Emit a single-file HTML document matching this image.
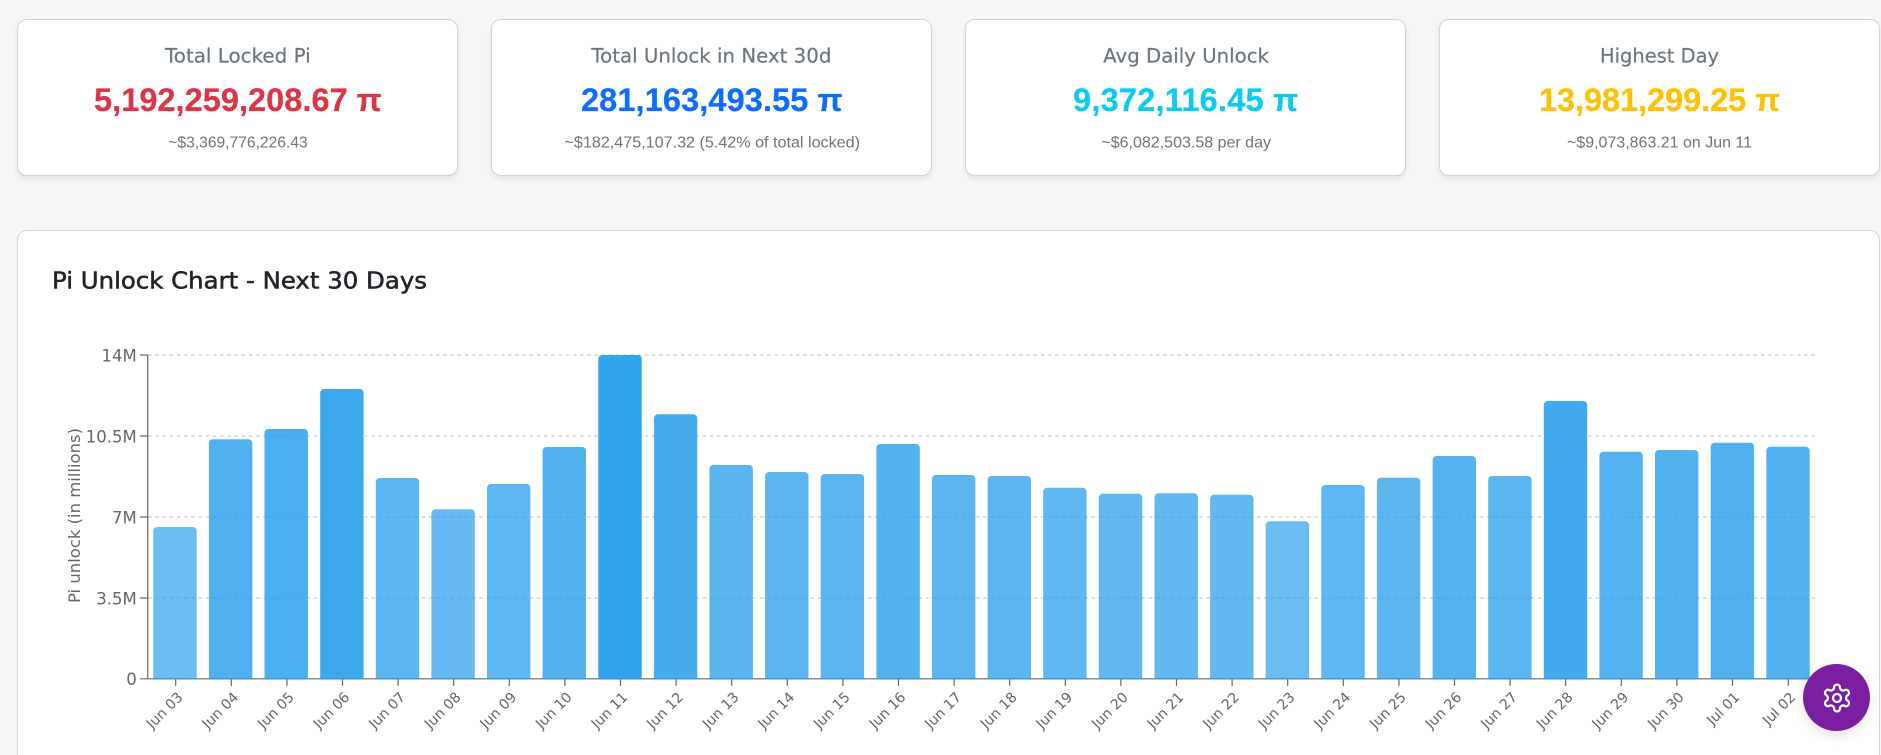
<!DOCTYPE html>
<html lang="en">
<head>
<meta charset="utf-8">
<title>Pi Unlock Dashboard</title>
<style>
html,body{margin:0;padding:0;width:1881px;height:755px;overflow:hidden;background:#f6f6f6;}
body{position:relative;font-family:"Liberation Sans",Arial,sans-serif;}
.card{position:absolute;box-sizing:border-box;background:#fff;border:1px solid #d4d4d4;border-radius:10px;box-shadow:0 3px 6px rgba(0,0,0,.08);}
svg.page{position:absolute;left:0;top:0;}
.fab{position:absolute;left:1803px;top:664px;width:67px;height:67px;border-radius:50%;background:#7b1fa2;box-shadow:0 4px 12px rgba(0,0,0,.12);}
.fab svg{position:absolute;left:17.5px;top:17.5px;}
text{font-family:"DejaVu Sans",sans-serif;}
.t{font-size:19.5px;fill:#6c757d;stroke:#6c757d;stroke-width:.2px;}
.n{font-family:"Liberation Sans",Arial,sans-serif;font-size:32.5px;font-weight:700;stroke-width:.25px;}
.s{font-family:"Liberation Sans",Arial,sans-serif;font-size:16px;fill:#6c757d;}
.yl{font-size:16.5px;fill:#666;text-anchor:end;}
.xl{font-size:14.1px;fill:#666;text-anchor:end;}
</style>
</head>
<body>
<div class="card" style="left:17px;top:19px;width:441px;height:157px"></div>
<div class="card" style="left:491px;top:19px;width:441px;height:157px"></div>
<div class="card" style="left:965px;top:19px;width:441px;height:157px"></div>
<div class="card" style="left:1439px;top:19px;width:440.5px;height:157px"></div>
<div class="card" style="left:17px;top:230px;width:1862.5px;height:525px;border-bottom:none;border-radius:10px 10px 0 0;box-shadow:none"></div>

<svg class="page" width="1881" height="755" viewBox="0 0 1881 755" xmlns="http://www.w3.org/2000/svg">
<defs><clipPath id="c"><rect x="140" y="340" width="1690" height="339.4"/></clipPath></defs>

<text class="t" x="165" y="62.7" textLength="145.7" lengthAdjust="spacingAndGlyphs">Total Locked Pi</text>
<text class="n" x="94" y="111" fill="#dc3545" stroke="#dc3545" textLength="287.7" lengthAdjust="spacing">5,192,259,208.67 π</text>
<text class="s" x="168.3" y="147.3" textLength="139.4" lengthAdjust="spacingAndGlyphs">~$3,369,776,226.43</text>

<text class="t" x="591.4" y="62.7" textLength="240" lengthAdjust="spacingAndGlyphs">Total Unlock in Next 30d</text>
<text class="n" x="581" y="111" fill="#0d6efd" stroke="#0d6efd" textLength="261.5" lengthAdjust="spacing">281,163,493.55 π</text>
<text class="s" x="564.5" y="147.3" textLength="295.5" lengthAdjust="spacingAndGlyphs">~$182,475,107.32 (5.42% of total locked)</text>

<text class="t" x="1103.2" y="62.7" textLength="165.8" lengthAdjust="spacingAndGlyphs">Avg Daily Unlock</text>
<text class="n" x="1073" y="111" fill="#0dcaf0" stroke="#0dcaf0" textLength="225" lengthAdjust="spacing">9,372,116.45 π</text>
<text class="s" x="1101.4" y="147.3" textLength="169.6" lengthAdjust="spacingAndGlyphs">~$6,082,503.58 per day</text>

<text class="t" x="1600" y="62.7" textLength="119" lengthAdjust="spacingAndGlyphs">Highest Day</text>
<text class="n" x="1539" y="111" fill="#ffc107" stroke="#ffc107" textLength="241" lengthAdjust="spacing">13,981,299.25 π</text>
<text class="s" x="1567" y="147.3" textLength="185" lengthAdjust="spacingAndGlyphs">~$9,073,863.21 on Jun 11</text>

<text x="52" y="288.5" font-size="23.5" fill="#212529" stroke="#212529" stroke-width=".55" textLength="375" lengthAdjust="spacingAndGlyphs">Pi Unlock Chart - Next 30 Days</text>

<g stroke="#ccc" stroke-width="1.2" stroke-dasharray="3.6 3.6" fill="none">
<line x1="148" x2="1817" y1="355" y2="355"/>
<line x1="148" x2="1817" y1="436" y2="436"/>
<line x1="148" x2="1817" y1="517" y2="517"/>
<line x1="148" x2="1817" y1="598" y2="598"/>
</g>

<g stroke="#666" stroke-width="1.2" fill="none">
<line x1="147.7" x2="147.7" y1="355" y2="679"/>
<line x1="140" x2="1817" y1="678.8" y2="678.8"/>
<line x1="140" x2="147.7" y1="355" y2="355"/>
<line x1="140" x2="147.7" y1="436" y2="436"/>
<line x1="140" x2="147.7" y1="517" y2="517"/>
<line x1="140" x2="147.7" y1="598" y2="598"/>
<line x1="175.7" x2="175.7" y1="679" y2="686"/><line x1="231.3" x2="231.3" y1="679" y2="686"/><line x1="286.9" x2="286.9" y1="679" y2="686"/><line x1="342.5" x2="342.5" y1="679" y2="686"/><line x1="398.1" x2="398.1" y1="679" y2="686"/><line x1="453.7" x2="453.7" y1="679" y2="686"/><line x1="509.3" x2="509.3" y1="679" y2="686"/><line x1="564.9" x2="564.9" y1="679" y2="686"/><line x1="620.5" x2="620.5" y1="679" y2="686"/><line x1="676.1" x2="676.1" y1="679" y2="686"/><line x1="731.7" x2="731.7" y1="679" y2="686"/><line x1="787.3" x2="787.3" y1="679" y2="686"/><line x1="842.9" x2="842.9" y1="679" y2="686"/><line x1="898.5" x2="898.5" y1="679" y2="686"/><line x1="954.1" x2="954.1" y1="679" y2="686"/><line x1="1009.7" x2="1009.7" y1="679" y2="686"/><line x1="1065.3" x2="1065.3" y1="679" y2="686"/><line x1="1120.9" x2="1120.9" y1="679" y2="686"/><line x1="1176.5" x2="1176.5" y1="679" y2="686"/><line x1="1232.1" x2="1232.1" y1="679" y2="686"/><line x1="1287.7" x2="1287.7" y1="679" y2="686"/><line x1="1343.3" x2="1343.3" y1="679" y2="686"/><line x1="1398.9" x2="1398.9" y1="679" y2="686"/><line x1="1454.5" x2="1454.5" y1="679" y2="686"/><line x1="1510.1" x2="1510.1" y1="679" y2="686"/><line x1="1565.7" x2="1565.7" y1="679" y2="686"/><line x1="1621.3" x2="1621.3" y1="679" y2="686"/><line x1="1676.9" x2="1676.9" y1="679" y2="686"/><line x1="1732.5" x2="1732.5" y1="679" y2="686"/><line x1="1788.3" x2="1788.3" y1="679" y2="686"/>
</g>

<g clip-path="url(#c)" fill="#219beb">
<rect x="153.3" y="527" width="43.4" height="170" rx="4" fill-opacity=".66"/>
<rect x="208.9" y="439.3" width="43.4" height="260" rx="4" fill-opacity=".79"/>
<rect x="264.5" y="429" width="43.4" height="270" rx="4" fill-opacity=".81"/>
<rect x="320.2" y="389" width="43.4" height="310" rx="4" fill-opacity=".87"/>
<rect x="375.8" y="478" width="43.4" height="220" rx="4" fill-opacity=".73"/>
<rect x="431.4" y="509.3" width="43.4" height="190" rx="4" fill-opacity=".69"/>
<rect x="487" y="484" width="43.4" height="210" rx="4" fill-opacity=".72"/>
<rect x="542.6" y="447" width="43.4" height="250" rx="4" fill-opacity=".78"/>
<rect x="598.3" y="355" width="43.4" height="340" rx="4" fill-opacity=".92"/>
<rect x="653.9" y="414.3" width="43.4" height="280" rx="4" fill-opacity=".83"/>
<rect x="709.5" y="465" width="43.4" height="230" rx="4" fill-opacity=".75"/>
<rect x="765.1" y="472" width="43.4" height="225" rx="4" fill-opacity=".74"/>
<rect x="820.7" y="474" width="43.4" height="225" rx="4" fill-opacity=".74"/>
<rect x="876.4" y="444" width="43.4" height="250" rx="4" fill-opacity=".78"/>
<rect x="932" y="475" width="43.4" height="220" rx="4" fill-opacity=".74"/>
<rect x="987.6" y="476" width="43.4" height="220" rx="4" fill-opacity=".74"/>
<rect x="1043.2" y="487.7" width="43.4" height="210" rx="4" fill-opacity=".72"/>
<rect x="1098.8" y="493.7" width="43.4" height="200" rx="4" fill-opacity=".71"/>
<rect x="1154.5" y="493.3" width="43.4" height="200" rx="4" fill-opacity=".71"/>
<rect x="1210.1" y="494.7" width="43.4" height="200" rx="4" fill-opacity=".71"/>
<rect x="1265.7" y="521.3" width="43.4" height="175" rx="4" fill-opacity=".67"/>
<rect x="1321.3" y="485" width="43.4" height="210" rx="4" fill-opacity=".72"/>
<rect x="1376.9" y="477.7" width="43.4" height="220" rx="4" fill-opacity=".73"/>
<rect x="1432.6" y="456" width="43.4" height="240" rx="4" fill-opacity=".77"/>
<rect x="1488.2" y="476" width="43.4" height="220" rx="4" fill-opacity=".74"/>
<rect x="1543.8" y="401" width="43.4" height="295" rx="4" fill-opacity=".85"/>
<rect x="1599.4" y="451.7" width="43.4" height="245" rx="4" fill-opacity=".77"/>
<rect x="1655" y="450" width="43.4" height="245" rx="4" fill-opacity=".78"/>
<rect x="1710.7" y="442.7" width="43.4" height="255" rx="4" fill-opacity=".79"/>
<rect x="1766.3" y="446.7" width="43.4" height="250" rx="4" fill-opacity=".78"/>
</g>

<text class="yl" x="136.7" y="361.5">14M</text>
<text class="yl" x="136.7" y="442.5">10.5M</text>
<text class="yl" x="136.7" y="523.5">7M</text>
<text class="yl" x="136.7" y="604.5">3.5M</text>
<text class="yl" x="136.7" y="685">0</text>

<text font-size="16" fill="#666" text-anchor="middle" transform="translate(80,515.5) rotate(-90)" textLength="175" lengthAdjust="spacingAndGlyphs">Pi unlock (in millions)</text>

<g>
<text class="xl" transform="translate(183.7,698) rotate(-45)">Jun 03</text>
<text class="xl" transform="translate(239.3,698) rotate(-45)">Jun 04</text>
<text class="xl" transform="translate(294.9,698) rotate(-45)">Jun 05</text>
<text class="xl" transform="translate(350.5,698) rotate(-45)">Jun 06</text>
<text class="xl" transform="translate(406.1,698) rotate(-45)">Jun 07</text>
<text class="xl" transform="translate(461.7,698) rotate(-45)">Jun 08</text>
<text class="xl" transform="translate(517.3,698) rotate(-45)">Jun 09</text>
<text class="xl" transform="translate(572.9,698) rotate(-45)">Jun 10</text>
<text class="xl" transform="translate(628.5,698) rotate(-45)">Jun 11</text>
<text class="xl" transform="translate(684.1,698) rotate(-45)">Jun 12</text>
<text class="xl" transform="translate(739.7,698) rotate(-45)">Jun 13</text>
<text class="xl" transform="translate(795.3,698) rotate(-45)">Jun 14</text>
<text class="xl" transform="translate(850.9,698) rotate(-45)">Jun 15</text>
<text class="xl" transform="translate(906.5,698) rotate(-45)">Jun 16</text>
<text class="xl" transform="translate(962.1,698) rotate(-45)">Jun 17</text>
<text class="xl" transform="translate(1017.7,698) rotate(-45)">Jun 18</text>
<text class="xl" transform="translate(1073.3,698) rotate(-45)">Jun 19</text>
<text class="xl" transform="translate(1128.9,698) rotate(-45)">Jun 20</text>
<text class="xl" transform="translate(1184.5,698) rotate(-45)">Jun 21</text>
<text class="xl" transform="translate(1240.1,698) rotate(-45)">Jun 22</text>
<text class="xl" transform="translate(1295.7,698) rotate(-45)">Jun 23</text>
<text class="xl" transform="translate(1351.3,698) rotate(-45)">Jun 24</text>
<text class="xl" transform="translate(1406.9,698) rotate(-45)">Jun 25</text>
<text class="xl" transform="translate(1462.5,698) rotate(-45)">Jun 26</text>
<text class="xl" transform="translate(1518.1,698) rotate(-45)">Jun 27</text>
<text class="xl" transform="translate(1573.7,698) rotate(-45)">Jun 28</text>
<text class="xl" transform="translate(1629.3,698) rotate(-45)">Jun 29</text>
<text class="xl" transform="translate(1684.9,698) rotate(-45)">Jun 30</text>
<text class="xl" transform="translate(1740.5,698) rotate(-45)">Jul 01</text>
<text class="xl" transform="translate(1796.3,698) rotate(-45)">Jul 02</text>
</g>
</svg>

<div class="fab">
<svg width="32" height="32" viewBox="0 0 24 24" fill="none" stroke="#fff" stroke-width="1.7" stroke-linecap="round" stroke-linejoin="round"><path d="M12.22 2h-.44a2 2 0 0 0-2 2v.18a2 2 0 0 1-1 1.73l-.43.25a2 2 0 0 1-2 0l-.15-.08a2 2 0 0 0-2.73.73l-.22.38a2 2 0 0 0 .73 2.73l.15.1a2 2 0 0 1 1 1.72v.51a2 2 0 0 1-1 1.74l-.15.09a2 2 0 0 0-.73 2.73l.22.38a2 2 0 0 0 2.73.73l.15-.08a2 2 0 0 1 2 0l.43.25a2 2 0 0 1 1 1.73V20a2 2 0 0 0 2 2h.44a2 2 0 0 0 2-2v-.18a2 2 0 0 1 1-1.73l.43-.25a2 2 0 0 1 2 0l.15.08a2 2 0 0 0 2.73-.73l.22-.39a2 2 0 0 0-.73-2.73l-.15-.08a2 2 0 0 1-1-1.74v-.5a2 2 0 0 1 1-1.74l.15-.09a2 2 0 0 0 .73-2.73l-.22-.38a2 2 0 0 0-2.73-.73l-.15.08a2 2 0 0 1-2 0l-.43-.25a2 2 0 0 1-1-1.73V4a2 2 0 0 0-2-2z"/><circle cx="12" cy="12" r="3"/></svg>
</div>
</body>
</html>
